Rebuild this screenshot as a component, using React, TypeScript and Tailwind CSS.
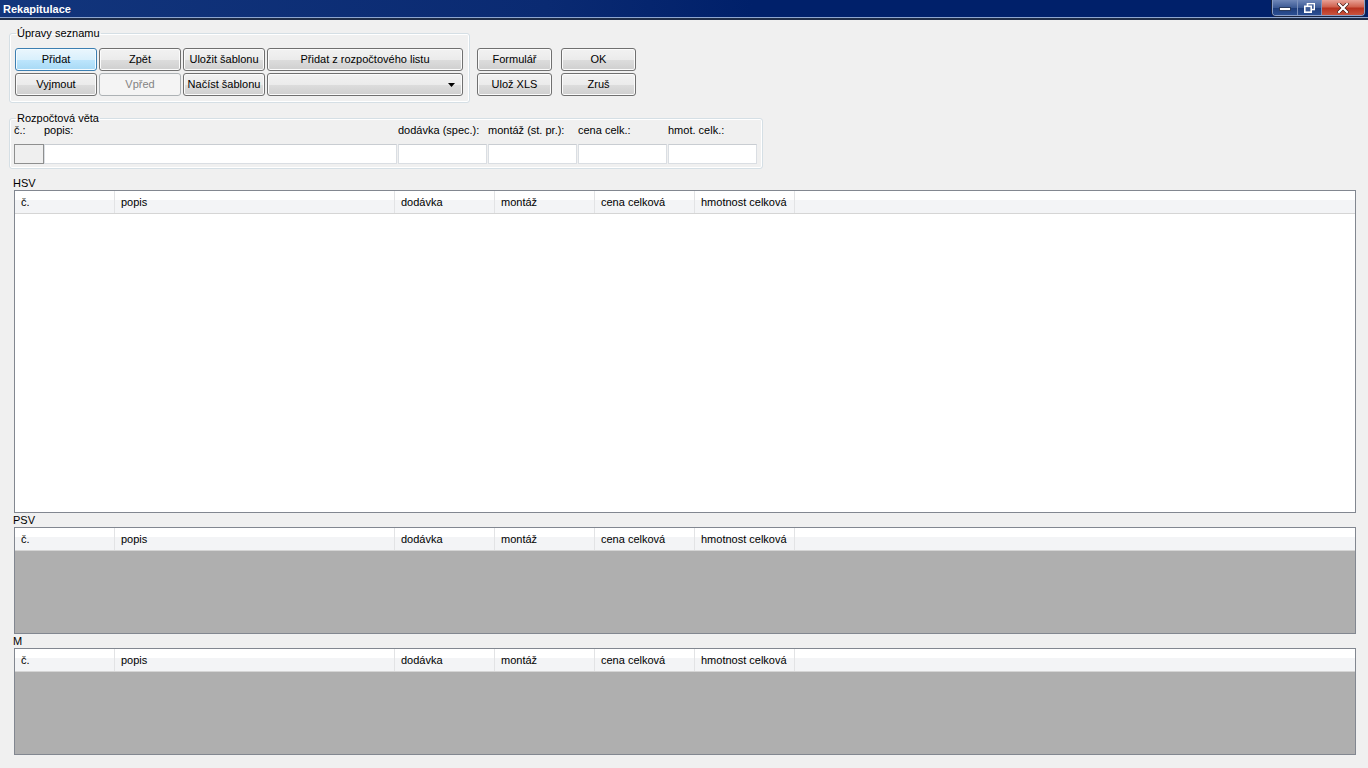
import React from "react";

const btnBase =
  "h-[23px] flex items-center justify-center rounded-[3px] border text-[11px] leading-none";
const btnNormal =
  "border-[#707070] text-black bg-[linear-gradient(to_bottom,#f2f2f2_0%,#ebebeb_50%,#dddddd_50%,#cfcfcf_100%)] shadow-[inset_0_0_0_1px_#fbfbfb]";
const btnDefault =
  "border-[#3c7fb1] text-black bg-[linear-gradient(to_bottom,#eaf6fd_0%,#d9f0fc_50%,#bee6fd_50%,#a7d9f5_100%)] shadow-[inset_0_0_0_1px_#f4fbff]";
const btnDisabled = "border-[#adb2b5] text-[#838383] bg-[#f4f4f4]";

function Btn({ label, kind = "normal" }: { label: string; kind?: "normal" | "default" | "disabled" }) {
  const cls = kind === "default" ? btnDefault : kind === "disabled" ? btnDisabled : btnNormal;
  return <div className={`${btnBase} ${cls}`}>{label}</div>;
}

function TitleBar() {
  return (
    <div className="h-[20px] shrink-0 flex flex-col">
      <div className="h-[18px] flex items-start justify-between bg-[linear-gradient(to_right,#12357c_0%,#0a2a72_40%,#00206a_55%,#00206a_100%)] border-b border-[#8ea6cf]">
        <span className="pl-[3px] pt-[3px] text-white font-bold text-[11px] leading-[12px]">Rekapitulace</span>
        <div className="mr-[3px] flex h-[16px] rounded-b-[4px] border border-t-0 border-[#8ca0c8] overflow-hidden shadow-[0_0_0_1px_#1a2440]">
          <div className="w-[25px] flex items-end justify-center pb-[4px] border-r border-[#7d92bd] bg-[linear-gradient(to_bottom,#6f87b8_0%,#3c5a95_50%,#1d3b78_51%,#2b4f93_100%)]">
            <div className="w-[12px] h-[4px] bg-white border border-[#2a3b5e]" />
          </div>
          <div className="w-[24px] flex items-center justify-center border-r border-[#7d92bd] bg-[linear-gradient(to_bottom,#6f87b8_0%,#3c5a95_50%,#1d3b78_51%,#2b4f93_100%)]">
            <svg width="11" height="10" viewBox="0 0 11 10">
              <rect x="3.5" y="0.5" width="7" height="6" fill="none" stroke="#fff" strokeWidth="1.6" />
              <rect x="0.8" y="3.3" width="6.4" height="5.9" fill="#3c5a95" stroke="#fff" strokeWidth="1.6" />
            </svg>
          </div>
          <div className="w-[42px] flex items-center justify-center bg-[linear-gradient(to_bottom,#e8a196_0%,#d0624f_45%,#b8321f_55%,#c9543e_100%)]">
            <svg width="12" height="10" viewBox="0 0 12 10">
              <path d="M2 1 L10 9 M10 1 L2 9" stroke="#3a1410" strokeWidth="3.4" strokeLinecap="square" />
              <path d="M2 1 L10 9 M10 1 L2 9" stroke="#fff" strokeWidth="2.2" strokeLinecap="square" />
            </svg>
          </div>
        </div>
      </div>
      <div className="h-[2px] bg-[#1f2d48]" />
    </div>
  );
}

const cols = [
  { label: "č.", w: "w-[100px]" },
  { label: "popis", w: "w-[280px]" },
  { label: "dodávka", w: "w-[100px]" },
  { label: "montáž", w: "w-[100px]" },
  { label: "cena celková", w: "w-[100px]" },
  { label: "hmotnost celková", w: "w-[100px]" },
];

function Grid({ className, body }: { className: string; body: string }) {
  return (
    <div className={`ml-[5px] flex flex-col border border-[#828790] ${className}`}>
      <div className="h-[23px] shrink-0 flex border-b border-[#d5d5d5] bg-[linear-gradient(to_bottom,#ffffff_0%,#ffffff_40%,#f3f4f6_41%,#f3f4f6_100%)]">
        {cols.map((c) => (
          <div key={c.label} className={`${c.w} shrink-0 h-full flex items-center pl-[6px] border-r border-[#e2e3e5]`}>
            {c.label}
          </div>
        ))}
        <div className="flex-1" />
      </div>
      <div className={`flex-1 ${body}`} />
    </div>
  );
}

export default function App() {
  return (
    <div className="w-[1368px] h-[768px] overflow-hidden bg-[#f0f0f0] flex flex-col font-['Liberation_Sans',Arial,sans-serif] text-[11px] text-black">
      <TitleBar />
      <div className="flex-1 flex flex-col pl-[9px] pr-[12px] pb-[13px]">
        <div className="flex items-start pt-[7px]">
          <fieldset className="w-[461px] border border-[#d5dfe5] rounded-[3px] px-[5px] pt-[8px] pb-[6px] shadow-[inset_0_0_0_1px_#ffffff]">
            <legend className="ml-[1px] px-[1px] leading-[13px]">Úpravy seznamu</legend>
            <div className="grid grid-cols-[82px_82px_82px_196px] gap-x-[2px] gap-y-[2px]">
              <Btn label="Přidat" kind="default" />
              <Btn label="Zpět" />
              <Btn label="Uložit šablonu" />
              <Btn label="Přidat z rozpočtového listu" />
              <Btn label="Vyjmout" />
              <Btn label="Vpřed" kind="disabled" />
              <Btn label="Načíst šablonu" />
              <div className={`${btnBase} ${btnNormal} justify-end pr-[7px]`}>
                <svg width="7" height="4" viewBox="0 0 7 4">
                  <path d="M0 0 H7 L3.5 4 Z" fill="#000" />
                </svg>
              </div>
            </div>
          </fieldset>
          <div className="ml-[7px] mt-[21px] grid grid-cols-[75px_75px] gap-x-[9px] gap-y-[2px]">
            <Btn label="Formulář" />
            <Btn label="OK" />
            <Btn label="Ulož XLS" />
            <Btn label="Zruš" />
          </div>
        </div>

        <fieldset className="mt-[9px] w-[754px] border border-[#d5dfe5] rounded-[3px] pl-[4px] pb-[4px] shadow-[inset_0_0_0_1px_#ffffff]">
          <legend className="ml-[2px] px-[1px] leading-[13px]">Rozpočtová věta</legend>
          <div className="grid grid-cols-[30px_354px_90px_90px_90px_90px] leading-[13px] -mt-[1px]">
            <span>č.:</span>
            <span>popis:</span>
            <span>dodávka (spec.):</span>
            <span>montáž (st. pr.):</span>
            <span>cena celk.:</span>
            <span>hmot. celk.:</span>
          </div>
          <div className="mt-[7px] grid grid-cols-[30px_354px_90px_90px_90px_90px]">
            <div className="h-[20px] border border-[#8e8f8f] bg-[#efefef]" />
            <div className="h-[20px] w-[353px] border border-[#dadee3] border-t-[#c9cdd2] bg-white" />
            <div className="h-[20px] w-[89px] border border-[#dadee3] border-t-[#c9cdd2] bg-white" />
            <div className="h-[20px] w-[89px] border border-[#dadee3] border-t-[#c9cdd2] bg-white" />
            <div className="h-[20px] w-[89px] border border-[#dadee3] border-t-[#c9cdd2] bg-white" />
            <div className="h-[20px] w-[89px] border border-[#dadee3] border-t-[#c9cdd2] bg-white" />
          </div>
        </fieldset>

        <div className="mt-[8px] ml-[4px] leading-[13px]">HSV</div>
        <Grid className="flex-1" body="bg-white" />
        <div className="mt-[1px] ml-[4px] leading-[13px]">PSV</div>
        <Grid className="h-[107px] shrink-0" body="bg-[#afafaf]" />
        <div className="mt-[1px] ml-[4px] leading-[13px]">M</div>
        <Grid className="h-[107px] shrink-0" body="bg-[#afafaf]" />
      </div>
    </div>
  );
}
